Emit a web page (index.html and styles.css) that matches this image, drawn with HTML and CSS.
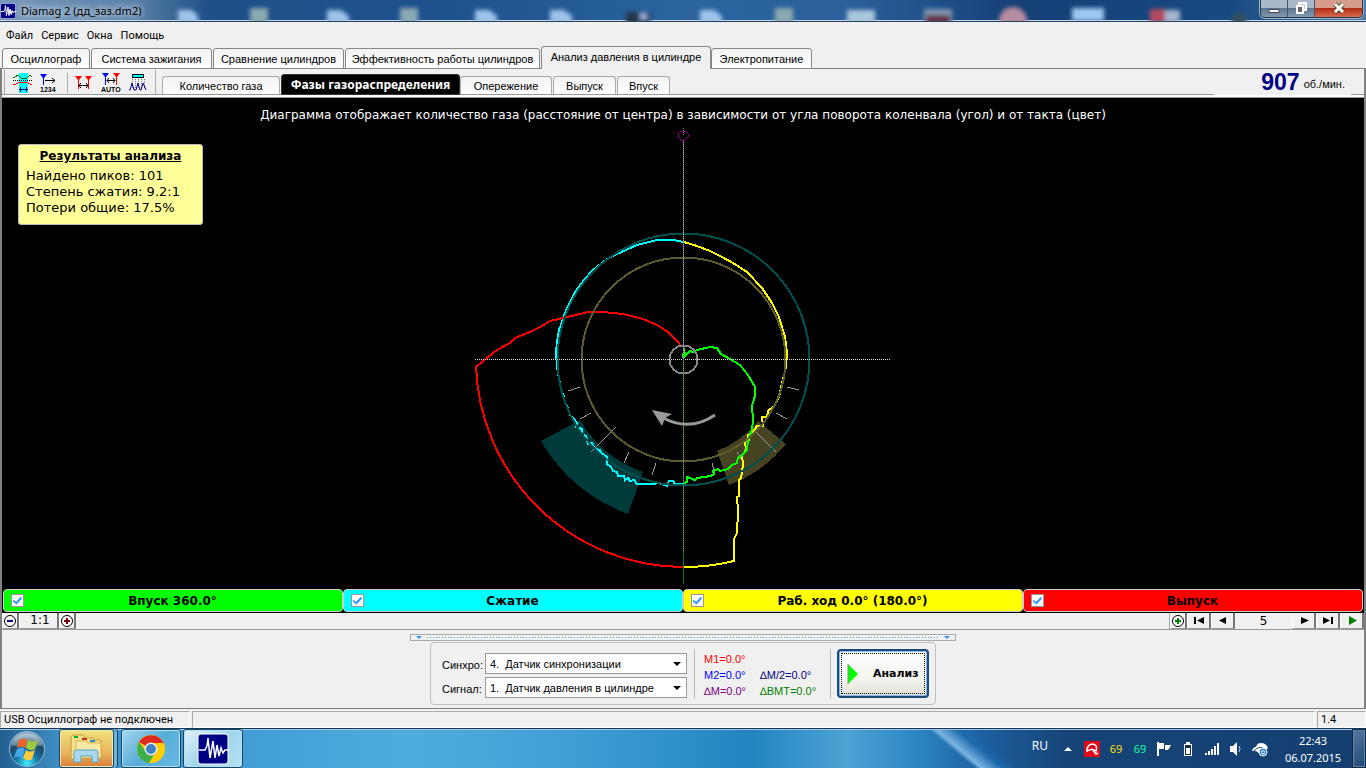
FILE: index.html
```html
<!DOCTYPE html>
<html lang="ru">
<head>
<meta charset="utf-8">
<title>Diamag 2</title>
<link rel="stylesheet" href="styles.css">
</head>
<body>
<header class="titlebar">
  <svg class="app-icon" viewBox="0 0 32 32"><rect x="1" y="1" width="30" height="30" rx="3" fill="#000084" stroke="#eef"/><path d="M2 17h6l2-4 1-8 2 20 3-17 2 17 2-13 2 11 2-8 2 5 2-3h4" fill="none" stroke="#fff" stroke-width="2"/></svg>
  <span class="caption">Diamag 2 (дд_заз.dm2)</span>
  <svg class="glass" width="1140" height="21" aria-hidden="true">
    <defs><filter id="soft"><feGaussianBlur stdDeviation="2"/></filter></defs>
    <g filter="url(#soft)">
      <path d="M28 10h14l6 6v8H28zM177 10h14l8 6v8h-22zM325 10h14l8 6v8h-22zM400 10h14l8 6v8h-22zM550 10h14l8 6v8h-22z" fill="#9fc3e8"/>
      <path d="M100 8h18v16h-18zM250 8h18v16h-18zM625 8h18v16h-18z" fill="#8ba9b0"/>
      <path d="M476 12h24v12h-24z" fill="#23384a"/><path d="M490 13h7v7h-7z" fill="#9ad"/>
      <path d="M697 10h28v14h-28z" fill="#a9c6da"/>
      <path d="M774 9h28v14h-28z" fill="#7f98ae"/><path d="M776 15h24v9h-24z" fill="#673346"/>
      <circle cx="863" cy="21" r="14" fill="#b78ba0"/>
      <path d="M922 8h32v13h-32z" fill="#9fc8f0"/>
      <path d="M1000 9h15v14h-15z" fill="#b04b60"/><path d="M1015 10h15v12h-15z" fill="#a6b4cf"/>
      <path d="M1082 14h14v10h-14z" fill="#35505c"/>
    </g>
  </svg>
  <div class="window-buttons">
    <button class="win" aria-label="Свернуть"><svg width="14" height="14"><path d="M2 8.500h10v3H2z" fill="#fff" stroke="#445"/></svg></button>
    <button class="win" aria-label="Развернуть"><svg width="14" height="14"><path d="M5 2h7v7H5z" fill="#ccd" stroke="#fff" stroke-width="2"/><path d="M3 5h6v7H3z" fill="#667" stroke="#fff" stroke-width="2"/></svg></button>
    <button class="win close" aria-label="Закрыть"><svg width="14" height="14"><path d="M3 3l8 8M11 3l-8 8" stroke="#543" stroke-width="5"/><path d="M3 3l8 8M11 3l-8 8" stroke="#fff" stroke-width="3"/></svg></button>
  </div>
</header>

<nav class="menu"><button>Файл</button><button>Сервис</button><button>Окна</button><button>Помощь</button></nav>

<nav class="main-tabs">
  <button>Осциллограф</button><button>Система зажигания</button><button>Сравнение цилиндров</button><button>Эффективность работы цилиндров</button><button class="on">Анализ давления в цилиндре</button><button>Электропитание</button>
</nav>

<main class="frame">
  <div class="toolbar">
    <div class="tools">
      <button aria-label="Сигналы"><svg width="20" height="20" shape-rendering="crispEdges"><path d="M6 0h9v20H6z" fill="#0ff"/><path d="M0 4h2l3-2 3 3 3 1 3-1 3-3 2 2" stroke="#070" fill="none"/><path d="M0 11h3l4-2h6l4 2h2" stroke="red" fill="none"/><path d="M0 7.500h19" stroke="#000" stroke-dasharray="1 1"/><path d="M6 16.500h9M7.500 14v5M13.500 14v5" stroke="#008"/></svg></button>
      <button aria-label="Нумерация"><svg width="20" height="20"><path d="M0 1h7L4 5v7H3V5z" fill="blue"/><path d="M5 7.500h10M12 5l3 2.500L12 10" stroke="#000" fill="none"/><text x="0" y="19" class="tiny">1234</text></svg></button>
      <button class="cut" aria-label="Маркеры"><svg width="20" height="20"><path d="M1 3h7L5 7v9H4V7zM11 3h7l-3 4v9h-1V7z" fill="red"/><path d="M5 12.500h9M7 10l-2 2.500L7 15M12 10l2 2.500-2 2.500" stroke="#000" fill="none"/></svg></button>
      <button aria-label="Авто"><svg width="20" height="20"><path d="M1 0h7L5 4v8H4V4z" fill="blue"/><path d="M12 0h7l-3 4v8h-1V4z" fill="red"/><path d="M6 7.500h8M8 5L6 7.500 8 10M12 5l2 2.500-2 2.500" stroke="#000" fill="none"/><text x="0" y="19" class="tiny">AUTO</text></svg></button>
      <button aria-label="Таблица"><svg width="20" height="20"><g shape-rendering="crispEdges"><path d="M4.500 1.500h11v3h-11z" fill="#0ff" stroke="#000"/><path d="M4.500 6v9M7.500 6v9M10.500 6v9M13.500 6v9M16.500 6v9" stroke="#777" stroke-dasharray="1 1"/></g><path d="M1 17h1l2-7 2 7h2l2-7 2 7h1l2-7 3 7" stroke="#008" fill="none"/></svg></button>
    </div>
    <div class="sub-tabs">
      <button>Количество газа</button><button class="on">Фазы газораспределения</button><button>Опережение</button><button>Выпуск</button><button>Впуск</button>
    </div>
    <div class="rpm"><strong>907</strong><span>об./мин.</span></div>
  </div>

  <section class="chart">
    <p class="chart-title">Диаграмма отображает количество газа (расстояние от центра) в зависимости от угла поворота коленвала (угол) и от такта (цвет)</p>
    <svg class="polar" width="456" height="456" viewBox="455 128 456 456" shape-rendering="crispEdges" fill="none">
      <path d="M541 441L580 420A119 119 0 0 0 643 472L628 514A164 164 0 0 1 541 441z" fill="#003a3a"/>
      <path d="M717 451A97 97 0 0 0 758 421L786 444A133 133 0 0 1 729 485z" fill="#454321"/>
      <g stroke="#999">
        <path d="M568 391l12-4M580 419l11-6M591 452l25-25M624 463l5-11M652 475l4-12M712 463l3 11M737 452l6 10M755 431l21 21M776 413l11 6M787 387l12 3"/>
      </g>
      <g stroke-width="2">
        <path stroke="#0ff" d="M684 242L673 240 657 240 637 245 617 254 607 259 593 270 584 280 575 292 569 304 565 313 559 330 557 342 556 353 557 366 558 373 562 393 564 396 565 403 568 408 570 415 574 419 577 423 576 427 582 429 582 434 586 436 588 444 592 443 595 449 600 450 601 453 607 457 607 464 611 467 613 471 617 472 618 476 624 476 625 480 628 478 630 481 634 480 637 484 652 484 659 483 667 486 669 481 673 481 675 484 683 484"/>
        <path stroke="#ff0" d="M684 242L697 246 710 251 722 257 733 263 747 272 762 288 772 303 779 317 785 337 787 353 786 367 782 383 779 397 774 406 768 411 767 417 762 417 763 426 757 426 753 432 748 435 749 440 745 442 746 450 742 455 743 465 741 478 739 480 739 496 737 497 738 511 737 533 734 539 734 561A208 208 0 0 1 683 567"/>
        <path stroke="#f00" d="M682 347L678 342 668 332 657 325 643 319 623 314 603 312 588 312 563 318 550 321 542 326 532 331 515 338 510 343 497 350 488 357 476 367A208 208 0 0 0 683 567"/>
        <path stroke="#0f0" d="M683 358L684 348 685 356 690 351 693 352 697 350 710 347 717 348 721 354 730 359 740 365 748 375 755 387 755 396 752 406 753 420 752 430 748 440 747 450 742 455 738 458 737 463 732 465 728 469 720 471 718 469 713 471 714 474 711 476 697 478 695 480 687 477 687 482 684 483"/>
        <circle cx="683.500" cy="359.500" r="126" stroke="#004f4f"/>
        <circle cx="683.500" cy="359.500" r="102" stroke="#5d5b2e"/>
        <circle cx="683.500" cy="359.500" r="14" stroke="#888"/>
      </g>
      <path d="M475 359.500H890" stroke="#ddd" stroke-dasharray="1 1"/>
      <path d="M683.500 140V360" stroke="#53537a"/><path d="M683.500 140V360" stroke="#bbb" stroke-dasharray="1 1"/>
      <path d="M683.500 360V584" stroke="#087a08"/><path d="M683.500 360V552" stroke="#999" stroke-dasharray="1 1"/>
      <path d="M681 131h4l3 3v3l-3 3h-4l-3-3v-3z" stroke="#8b008b"/><path d="M683.500 128v7" stroke="#777" stroke-dasharray="1 1"/>
      <g shape-rendering="auto"><path d="M663 418Q690 432 715 415" stroke="#999" stroke-width="3"/><path d="M652 410l20 4-7 4-3 8z" fill="#999"/></g>
    </svg>
    <aside class="results">
      <h2>Результаты анализа</h2>
      <p>Найдено пиков: 101</p><p>Степень сжатия: 9.2:1</p><p>Потери общие: 17.5%</p>
    </aside>
  </section>

  <div class="strokes">
    <label class="green"><input type="checkbox" checked><span>Впуск 360.0°</span></label>
    <label class="cyan"><input type="checkbox" checked><span>Сжатие</span></label>
    <label class="yellow"><input type="checkbox" checked><span>Раб. ход 0.0° (180.0°)</span></label>
    <label class="red"><input type="checkbox" checked><span>Выпуск</span></label>
  </div>

  <div class="pager">
    <button class="round" aria-label="Уменьшить"><svg width="14" height="14"><circle cx="7" cy="7" r="5.500" fill="#fff" stroke="#000"/><path d="M4 7h6" stroke="#008" stroke-width="2"/></svg></button>
    <button class="ratio">1:1</button>
    <button class="round" aria-label="Увеличить"><svg width="14" height="14"><circle cx="7" cy="7" r="5.500" fill="#fff" stroke="#000"/><path d="M4 7h6M7 4v6" stroke="#800000" stroke-width="2"/></svg></button>
    <span class="space"></span>
    <button class="round" aria-label="Добавить"><svg width="14" height="14"><circle cx="7" cy="7" r="5.500" fill="#fff" stroke="#000"/><path d="M4 7h6M7 4v6" stroke="#008000" stroke-width="2"/></svg></button>
    <button aria-label="Первый"><svg width="12" height="9"><path d="M1 1h2v7H1zM11 1v7L4 4.500z"/></svg></button>
    <button aria-label="Предыдущий"><svg width="12" height="9"><path d="M9 1v7L2 4.500z"/></svg></button>
    <output>5</output>
    <button aria-label="Следующий"><svg width="12" height="9"><path d="M3 1v7l8-3.500z"/></svg></button>
    <button aria-label="Последний"><svg width="12" height="9"><path d="M9 1h2v7H9zM1 1v7l7-3.500z"/></svg></button>
    <button aria-label="Пуск"><svg width="12" height="9"><path d="M3 0v9l8-4.500z" fill="#008000"/></svg></button>
  </div>

  <div class="bottom">
    <button class="splitter" aria-label="Свернуть панель"><i></i><b></b><i></i></button>
    <form class="panel">
      <div class="sources">
        <label for="sync">Синхро:</label>
        <div class="combo"><select id="sync"><option>4.&nbsp; Датчик синхронизации</option></select><svg width="8" height="5"><path d="M0 0h8L4 4z"/></svg></div>
        <label for="signal">Сигнал:</label>
        <div class="combo"><select id="signal"><option>1.&nbsp; Датчик давления в цилиндре</option></select><svg width="8" height="5"><path d="M0 0h8L4 4z"/></svg></div>
      </div>
      <div class="markers">
        <span class="m1">M1=0.0°</span><span></span>
        <span class="m2">M2=0.0°</span><span class="mh">∆M/2=0.0°</span>
        <span class="dm">∆M=0.0°</span><span class="bmt">∆ВМТ=0.0°</span>
      </div>
      <button type="button" class="analyze"><svg width="12" height="20"><path d="M1 0l10 10L1 20z" fill="#0f0"/><path d="M1 0v20" stroke="#888"/></svg><span>Анализ</span></button>
    </form>
  </div>
</main>

<footer class="status"><span>USB Осциллограф не подключен</span><span></span><span>1.4</span></footer>

<div class="taskbar">
  <button class="start" aria-label="Пуск"><svg width="38" height="38" viewBox="0 0 38 38">
    <defs><radialGradient id="orb" cx="50%" cy="90%" r="80%"><stop offset="0" stop-color="#3df0ff"/><stop offset=".4" stop-color="#1673a4"/><stop offset=".75" stop-color="#1c4766"/><stop offset="1" stop-color="#8aa9bd"/></radialGradient></defs>
    <circle cx="19" cy="19" r="17.500" fill="url(#orb)" stroke="#8db9d3"/><path d="M4 15a15.500 15.500 0 0 1 30 0Q19 20 4 15z" fill="#fff" opacity=".3"/>
    <path d="M11 10q5-3 8 0l-2 8q-4-3-8 0z" fill="#f0622a"/><path d="M20 10q5 3 10 0l-3 9q-4 3-9-1z" fill="#9cc93d"/><path d="M9 19q4-3 8 0l-3 9q-4-3-8 0z" fill="#45a8e8"/><path d="M18 20q4 3 9 0l-3 9q-4 3-9-1z" fill="#fcca3a"/></svg></button>
  <button class="task folder" aria-label="Проводник"><svg width="36" height="34" viewBox="0 0 36 34"><path d="M2 27V5l2-2h10l2 3h8l1 2h7v18z" fill="#f5df88" stroke="#c99a3d"/><path d="M7 9h10l2 2h13v15H7z" fill="#faeaa4" stroke="#d7af50"/><path d="M5 4h4v2H5z" fill="#0a3"/><path d="M13 6h5v2h-5z" fill="#c32"/><path d="M21 8h5v2h-5z" fill="#28c"/><path d="M5 30V20q0-2 2-2h20q2 0 2 2v10h-6v-6H12v6z" fill="#a9d7ec" stroke="#5ba6c8"/></svg></button>
  <button class="task" aria-label="Chrome"><svg width="30" height="30" viewBox="0 0 30 30"><circle cx="15" cy="15" r="14" fill="#fc0"/><path d="M15 15L3 8A14 14 0 0 1 27.500 9H15z" fill="#df2a22"/><path d="M3 8a14 14 0 0 0 10 21l6-10H11z" fill="#3fae49"/><circle cx="15" cy="15" r="6.500" fill="#e8f2ea"/><circle cx="15" cy="15" r="5" fill="#4080c8"/></svg></button>
  <button class="task active" aria-label="Diamag 2"><svg width="32" height="32" viewBox="0 0 32 32"><rect x="1" y="1" width="30" height="30" rx="3" fill="#000084" stroke="#fff"/><path d="M2 17h6l2-4 1-8 2 20 3-17 2 17 2-13 2 11 2-8 2 5 2-3h4" fill="none" stroke="#fff" stroke-width="1.500"/></svg></button>
  <div class="tray">
    <span class="lang">RU</span>
    <svg class="up" width="8" height="16"><path d="M0 10l4-4 4 4z" fill="#fff"/></svg>
    <svg width="16" height="16"><path d="M0 0h16v16H0z" fill="#e10a17"/><path d="M3 10Q3 3 9 3q5 1 3 7Q8 7 3 10zM8 8l4 5 2-1" fill="none" stroke="#fff" stroke-width="1.500"/></svg>
    <span class="t1">69</span><span class="t2">69</span>
    <svg width="16" height="16"><path d="M1 1h2v14H1zM3 2h5v6H3zM9 4h6l-1 2-2 3H9z" fill="#fff"/></svg>
    <svg width="16" height="16"><path d="M6 1h4v2h2v12H4V3h2z" fill="#fff"/><path d="M5 4h6v10H5z" fill="#162f52"/><path d="M6 7h4v6H6z" fill="#fff"/></svg>
    <svg width="16" height="16"><path d="M1 12h2v2H1zM4 10h2v4H4zM7 8h2v6H7zM10 5h2v9h-2zM13 2h2v12h-2z" fill="#fff"/></svg>
    <svg width="16" height="16"><path d="M2 5h3l4-4v14l-4-4H2z" fill="#fff"/><path d="M11 5q2 3 0 6" stroke="#bcd" fill="none"/></svg>
    <svg width="16" height="16"><path d="M0 10q1-4 4-4 1-4 5-4 5 0 7 5L8 13q-4-4-8-3z" fill="#fff"/><path d="M2 10q4-5 9-3" stroke="#345" fill="none"/><circle cx="11" cy="11" r="4" fill="#2d83cf" stroke="#fff"/><path d="M9 11q2-3 4 0M9 12q2 2 4 0" stroke="#fff" fill="none"/></svg>
    <time>22:43<br>06.07.2015</time>
  </div>
  <button class="desktop" aria-label="Показать рабочий стол"></button>
</div>
</body>
</html>
```
FILE: styles.css
```css
* { box-sizing: border-box; }
body { margin: 0; height: 100vh; display: flex; flex-direction: column; overflow: hidden; background: #f0f0f0; color: #000; font: 11px "Liberation Sans", Arial, sans-serif; }
button { font: inherit; color: inherit; margin: 0; padding: 0; border: 0; background: none; white-space: nowrap; }
p, h2 { margin: 0; }
svg { display: block; flex: none; }

.titlebar { flex: none; height: 22px; display: flex; position: relative; align-items: center; overflow: hidden; border-bottom: 1px solid #29425f; box-shadow: inset 0 -1px #c7d9e9; background: linear-gradient(90deg, #7898b8, #5d83aa 130px, #1e4f87 210px, #1d528f 33%, #2b649f 50%, #2a609b 62%, #153f75 75%, #174a83 90%, #4c79a4); }
.app-icon { width: 16px; height: 16px; }
.caption { margin-left: 5px; font: 11px "Noto Sans", sans-serif; text-shadow: 0 0 6px #dce8f4, 0 0 8px #dce8f4; }
.glass { position: absolute; left: 150px; top: 0; }
.window-buttons { position: relative; margin: 0 3px 4px auto; display: flex; height: 18px; border: 1px solid #26384f; border-top: 0; border-radius: 0 0 5px 5px; overflow: hidden; box-shadow: 0 0 0 1px #9eb4ca; }
.win { width: 27px; display: grid; place-items: center; border-right: 1px solid #40566f; background: linear-gradient(#a9b9c9 45%, #5e7690 50%, #8499ad); }
.win.close { width: 47px; border: 0; background: linear-gradient(#d79b8c 45%, #b32d16 50%, #d96a4c); }

.menu { flex: none; height: 24px; padding: 2px 6px 0; display: flex; align-items: center; gap: 8px; font: 11px Roboto, sans-serif; }
.main-tabs { flex: none; height: 23px; padding-left: 2px; display: grid; grid-template-columns: 89px 122px 132px 196px 170px 102px; align-items: end; position: relative; margin-bottom: -1px; }
.main-tabs button, .sub-tabs button { height: 21px; margin-right: 1px; border: 1px solid #888; border-radius: 3px 3px 0 0; background: linear-gradient(#f2f2f2, #fff); overflow: hidden; }
.main-tabs button.on { height: 23px; margin-right: 0; padding-bottom: 2px; background: #f0f0f0; border-bottom-color: #f0f0f0; }

.frame { flex: 1; min-height: 0; display: flex; flex-direction: column; border: 1px solid #808080; border-left-width: 2px; border-right-width: 2px; }
.toolbar { flex: none; height: 29px; display: flex; align-items: flex-end; border-bottom: 1px solid #999; box-shadow: inset 0 -1px #fff, inset 0 -2px #fff, inset 0 -3px #999; }
.tools { align-self: flex-start; display: flex; align-items: center; gap: 7px; height: 25px; margin: 1px 0 0 2px; padding: 0 7px 0 8px; border-left: 1px solid #aaa; border-right: 1px solid #aaa; }
.tools .cut { border-left: 1px solid #aaa; padding-left: 6px; }
.tiny { font: bold 7px "Liberation Sans", sans-serif; }
.sub-tabs { margin: 0 0 2px 6px; display: grid; grid-template-columns: 119px 179px 93px 64px 54px; align-items: end; }
.sub-tabs button { height: 19px; border-color: #aaa #aaa #999; }
.sub-tabs button.on { height: 21px; margin-right: 0; background: #000; color: #fff; font: bold 12px "Noto Sans", sans-serif; border-color: #333; }
.rpm { margin: 0 13px 2px auto; width: 137px; height: 26px; display: flex; align-items: center; justify-content: flex-end; gap: 4px; padding-right: 6px; background: #f0f0f0; }
.rpm span { padding-top: 3px; }
.rpm strong { font-size: 23px; color: #000080; }

.chart { flex: 1; min-height: 0; position: relative; background: #000; display: flex; flex-direction: column; align-items: center; }
.chart-title { flex: none; height: 30px; padding-top: 8px; color: #fff; font: 12px/18px "DejaVu Sans", sans-serif; white-space: nowrap; }
.results { position: absolute; left: 16px; top: 46px; width: 185px; height: 81px; padding: 3px 7px; background: #ff9; border: 1px solid #bbb; border-radius: 3px; font: 13px/16px "DejaVu Sans", sans-serif; white-space: nowrap; }
.results h2 { font: bold 12px/16px "DejaVu Sans", sans-serif; text-decoration: underline; text-align: center; margin-bottom: 4px; }

.strokes { flex: none; height: 25px; padding: 1px; display: grid; grid-template-columns: repeat(4, 1fr); background: #000; }
.strokes label { display: flex; align-items: center; padding: 0 21px 0 7px; border: 1px solid #ccc; border-radius: 4px; font: bold 12px "DejaVu Sans", sans-serif; }
.strokes span { flex: 1; text-align: center; }
.strokes input { appearance: none; margin: 0; width: 13px; height: 13px; background: #fff; border: 1px solid #999; display: grid; place-items: center; }
.strokes input:checked::before { content: ""; width: 9px; height: 8px; background: #39f; clip-path: polygon(0 40%, 35% 65%, 90% 0, 100% 25%, 40% 100%, 0 65%); }
.green { background: #0f0; } .cyan { background: #0ff; } .yellow { background: #ff0; } .red { background: #f00; }

.pager { flex: none; height: 17px; display: flex; border-bottom: 1px solid #999; font: 12px/17px "DejaVu Sans", sans-serif; }
.pager button { width: 24px; display: grid; place-items: center; border-right: 2px solid #777; border-left: 1px solid #fff; border-bottom: 1px solid #999; }
.pager .round { width: 17px; }
.pager .ratio { width: 40px; padding-left: 3px; line-height: 15px; }
.pager output { width: 57px; text-align: center; }
.space { flex: 1; border-right: 1px solid #9ab; }

.bottom { flex: none; height: 78px; display: flex; flex-direction: column; align-items: center; padding-top: 4px; }
.splitter { width: 546px; height: 7px; display: flex; align-items: center; gap: 5px; padding: 0 5px; border: 1px solid #aaa; }
.splitter i { border: 3px solid transparent; border-top-color: #39f; border-bottom: 0; }
.splitter b { flex: 1; height: 1px; background: repeating-linear-gradient(90deg, #39f 0 1px, transparent 1px 3px); }
.panel { margin-top: 1px; width: 506px; height: 63px; display: flex; align-items: center; padding: 0 6px 0 11px; border: 1px solid #c0c0c0; border-radius: 4px; }
.sources { padding-top: 4px; display: grid; grid-template-columns: 43px 202px; gap: 3px 0; align-items: center; }
.sources label { padding-top: 2px; }
.combo { position: relative; }
.combo select { appearance: none; display: block; width: 100%; height: 21px; padding: 0 4px; border: 1px solid #999; border-radius: 0; background: #fff; color: #000; font: 11px "Liberation Sans", sans-serif; }
.combo svg { position: absolute; right: 6px; top: 9px; pointer-events: none; }
.markers { height: 50px; margin-left: 7px; padding: 2px 0 0 9px; width: 137px; display: grid; grid-template-columns: 56px 1fr; align-items: center; border-left: 1px solid #bbb; border-right: 1px solid #bbb; white-space: nowrap; }
.m1 { color: red; } .m2 { color: blue; } .mh { color: #000080; } .dm { color: purple; } .bmt { color: green; }
.analyze { margin-left: auto; width: 92px; height: 49px; display: flex; align-items: center; gap: 14px; padding-left: 8px; border: 2px solid #1c4a7c; border-radius: 4px; background: linear-gradient(#fff, #f4f4f0 60%, #e2e2d8); box-shadow: inset 0 0 0 1px #8ab8ea; outline: 1px dotted #000; outline-offset: -5px; font: bold 11px "DejaVu Sans", sans-serif; }

.status { flex: none; height: 19px; padding-top: 2px; display: grid; grid-template-columns: 190px 1fr 49px; gap: 2px; font: 11px Roboto, sans-serif; }
.status span { padding-left: 3px; border: 1px solid #aaa; border-right-color: #fff; border-bottom-color: #fff; white-space: nowrap; overflow: hidden; line-height: 15px; }

.taskbar { flex: none; height: 40px; display: flex; align-items: center; border-top: 1px solid #1a3855; box-shadow: inset 0 1px #9ec8e6; background: linear-gradient(40deg, transparent 0 69%, #7bb5e3 69.500%, #1c69ab 71%, transparent 72%), linear-gradient(90deg, #235f91, #3f8fc4 60px, #419dd4 240px, #4faddd 30%, #409ed4 42%, #2384c2 55%, #4da3d4 62%, #2d86c4 67%, #1c5f9f 72%, #164478 78%, #153e70); }
.start { width: 54px; display: grid; place-items: center; }
.task { width: 60px; height: 39px; margin-right: 2px; display: grid; place-items: center; border: 1px solid #164667; border-radius: 3px; background: linear-gradient(135deg, #a6d8ef, #58acd9 50%, #66bae3); box-shadow: inset 0 0 0 1px #b6e2f5; }
.task.folder { width: 55px; margin: 0 7px 0 5px; background: linear-gradient(#efe37d, #e9b65e 60%, #d87d39); box-shadow: inset 0 0 0 1px #f8e6a6, 3px 0 #68b4dc, 4px 0 #164667; }
.task.active { background: linear-gradient(135deg, #e4f4fb, #a0d5ed 50%, #b4e0f2); }
.tray { margin-left: auto; display: flex; align-items: center; gap: 8px; color: #fff; font: 11px/17px "Noto Sans", sans-serif; }
.lang { margin-right: 8px; padding-bottom: 6px; font-size: 12px; }
.tray .up { margin-right: 4px; }
.tray time { width: 62px; text-align: center; margin: 0 8px 0 6px; }
.t1, .t2 { width: 16px; text-align: center; }
.t1 { color: #fd0; } .t2 { color: #1f9; }
.desktop { width: 14px; height: 39px; border: 1px solid #0d2744; box-shadow: inset 0 0 0 1px #6384a5; background: linear-gradient(135deg, #5779a0, #1d4877); }
```
